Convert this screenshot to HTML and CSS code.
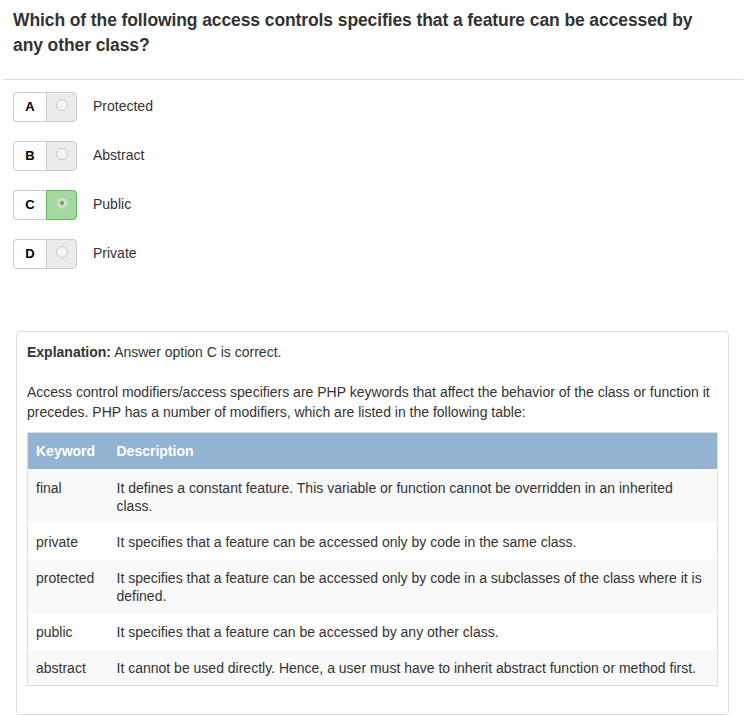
FILE: index.html
```html
<!DOCTYPE html>
<html>
<head>
<meta charset="utf-8">
<link rel="stylesheet" href="styles.css">
</head>
<body>
<div class="question">
  <h2 class="q-title">Which of the following access controls specifies that a feature can be accessed by any other class?</h2>
</div>
<hr class="divider">
<div class="options">
  <div class="option">
    <div class="btn-group"><span class="letter">A</span><span class="radio-cell"><span class="radio"></span></span></div>
    <span class="opt-label">Protected</span>
  </div>
  <div class="option">
    <div class="btn-group"><span class="letter">B</span><span class="radio-cell"><span class="radio"></span></span></div>
    <span class="opt-label">Abstract</span>
  </div>
  <div class="option">
    <div class="btn-group"><span class="letter">C</span><span class="radio-cell selected"><span class="radio checked"></span></span></div>
    <span class="opt-label">Public</span>
  </div>
  <div class="option">
    <div class="btn-group"><span class="letter">D</span><span class="radio-cell"><span class="radio"></span></span></div>
    <span class="opt-label">Private</span>
  </div>
</div>
<div class="panel">
  <p class="exp"><b>Explanation:</b> Answer option C is correct.</p>
  <p class="desc">Access control modifiers/access specifiers are PHP keywords that affect the behavior of the class or function it precedes. PHP has a number of modifiers, which are listed in the following table:</p>
  <table class="kw-table">
    <thead>
      <tr><th class="c1">Keyword</th><th>Description</th></tr>
    </thead>
    <tbody>
      <tr><td>final</td><td>It defines a constant feature. This variable or function cannot be overridden in an inherited class.</td></tr>
      <tr><td>private</td><td>It specifies that a feature can be accessed only by code in the same class.</td></tr>
      <tr><td>protected</td><td>It specifies that a feature can be accessed only by code in a subclasses of the class where it is defined.</td></tr>
      <tr><td>public</td><td>It specifies that a feature can be accessed by any other class.</td></tr>
      <tr><td>abstract</td><td>It cannot be used directly. Hence, a user must have to inherit abstract function or method first.</td></tr>
    </tbody>
  </table>
</div>
</body>
</html>
```
FILE: styles.css
```css
* { box-sizing: border-box; }
body {
  margin: 0;
  font-family: "Liberation Sans", Arial, sans-serif;
  font-size: 14px;
  line-height: 1.42857;
  color: #333;
  background: #fff;
}
.question {
  padding: 8px 20px 0 13px;
}
.q-title {
  margin: 0;
  font-size: 17.5px;
  font-weight: bold;
  line-height: 25px;
  color: #333;
  letter-spacing: -0.1px;
}
.divider {
  margin: 21px 2px 0 3px;
  border: 0;
  border-top: 1px solid #ddd;
  height: 0;
}
.options {
  padding: 12px 13px 0 13px;
  display: flex;
  flex-direction: column;
  gap: 19px;
}
.option {
  display: flex;
  align-items: center;
  height: 30px;
}
.btn-group {
  display: flex;
  height: 30px;
  width: 64px;
}
.letter {
  width: 33px;
  height: 30px;
  display: flex;
  align-items: center;
  justify-content: center;
  border: 1px solid #ccc;
  border-right: 0;
  border-radius: 4px 0 0 4px;
  background: #fff;
  font-weight: bold;
  font-size: 13px;
  color: #000;
}
.radio-cell {
  width: 31px;
  height: 30px;
  display: flex;
  align-items: center;
  justify-content: center;
  border: 1px solid #ccc;
  border-radius: 0 4px 4px 0;
  background: #ececec;
}
.radio-cell.selected {
  background: #a6d9a2;
  border-color: #5cb85c;
}
.radio {
  width: 12px;
  height: 12px;
  border-radius: 50%;
  border: 1px solid #c9c9c9;
  background: #f4f4f4;
  margin-top: -4px;
  position: relative;
}
.radio.checked {
  background: #c8e6c6;
  border-color: #b0d8ad;
}
.radio.checked::after {
  content: "";
  position: absolute;
  left: 3px;
  top: 3px;
  width: 4px;
  height: 4px;
  border-radius: 50%;
  background: #7a8f79;
}
.opt-label {
  margin-left: 16px;
  font-size: 14px;
  color: #333;
}
.panel {
  margin: 62px 16px 2px 16px;
  border: 1px solid #ddd;
  border-radius: 4px;
  padding: 10px 10px 28px 10px;
}
.exp {
  margin: 0;
  font-size: 14px;
  line-height: 20px;
}
.desc {
  margin: 20px 0 10px 0;
  font-size: 14px;
  line-height: 20px;
}
.kw-table {
  width: 100%;
  border-collapse: collapse;
  border: 1px solid #ddd;
  font-size: 14px;
}
.kw-table th {
  background: #92b4d2;
  color: #fff;
  text-align: left;
  font-weight: bold;
  padding: 8px 8px;
  height: 36px;
  line-height: 20px;
}
.kw-table th.c1 { width: 81px; }
.kw-table td {
  padding: 9px 8px 8px 8px;
  vertical-align: top;
  border-top: 1px solid #fff;
  line-height: 18px;
}
.kw-table td:first-child { width: 81px; }
.kw-table tbody tr:nth-child(odd) td { background: #f9f9f9; }
.kw-table tbody tr:nth-child(even) td { background: #fff; }
```
